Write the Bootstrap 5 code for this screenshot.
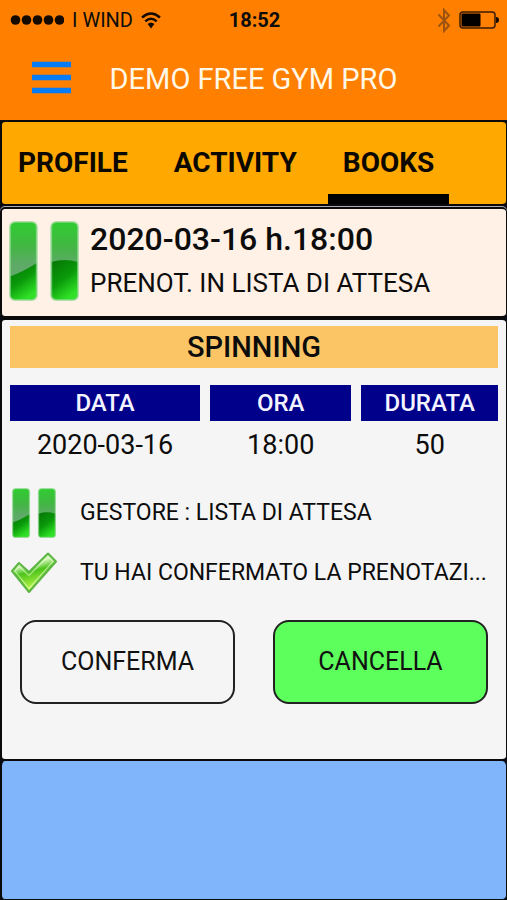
<!DOCTYPE html>
<html lang="it">
<head>
<meta charset="utf-8">
<meta name="viewport" content="width=device-width, initial-scale=1">
<title>Demo Free Gym Pro</title>
<link href="https://cdn.jsdelivr.net/npm/bootstrap@5.3.0/dist/css/bootstrap.min.css" rel="stylesheet">
<style>
  body { font-family: Roboto, "Liberation Sans", sans-serif; background: #ff8000; color: #0c0c0c; }
  .status { height: 40px; padding: 0 8px 0 10px; font-size: 20px; }
  .side { flex: 1 1 0; }
  .appbar { height: 80px; padding: 0 32px 2px; }
  .app-title { font-size: 29px; line-height: 40px; font-weight: 400; color: #fff8e8; }
  .balance { width: 39px; }
  .panels { background: #0a0a14; }
  .panel { border: 0 solid #0a0a0a; border-width: 2px 1px 2px 2px; border-radius: 5px; }
  .tabs { background: #ffa800; height: 86px; padding-left: 1px; }
  .tab-link { font-size: 28px; line-height: 40px; font-weight: 700; color: #0c0800; text-decoration: none; padding: 20px 15px 11px; border-bottom: 10px solid transparent; }
  .tab-link.active { border-color: #000; }
  .booking { background: #fff1e6; height: 111px; padding: 0 7px 3px; margin-top: 1px; box-shadow: 0 -1px #aaaabe; gap: 11px; }
  .booking h2 { font-size: 32px; line-height: 44px; font-weight: 500; }
  .booking p { font-size: 26px; line-height: 44px; }
  .detail { background: #f5f5f5; padding: 6px 8px 55px; }
  .course { background: #fbc565; font-size: 29px; line-height: 42px; font-weight: 500; margin-bottom: 17px; }
  .slots { border-collapse: separate; border-spacing: 0; table-layout: fixed; margin-bottom: 14px; }
  .slots th { background: #00008b; color: #f4f4ff; font-size: 24px; line-height: 36px; font-weight: 500; padding: 0; border-right: 10px solid #f5f5f5; }
  .slots th:last-child { border-right: 0; }
  .slots td { font-size: 27px; line-height: 48px; padding: 0 10px 0 0; }
  .slots td:last-child { padding: 0; }
  .c-date { width: 41%; } .c-hour { width: 31%; } .c-len { width: 28%; }
  .state { height: 60px; font-size: 23px; }
  .state svg { margin-right: 22px; }
  .actions { padding: 17px 10px 0; gap: 38px; }
  .act { height: 84px; font-size: 25px; border: 2px solid #222; border-radius: 16px; --bs-btn-color: #111; --bs-btn-hover-color: #111; }
  .act-cancel { background: #5cff5c; }
  .rest { background: #80b5fc; border-top-width: 0; border-bottom-width: 1px; }
</style>
</head>
<body class="d-flex flex-column min-vh-100">
<svg width="0" height="0" class="position-absolute" aria-hidden="true">
  <defs>
    <linearGradient id="barTop" x1="0" y1="0" x2="0" y2="1"><stop offset="0" stop-color="#30cc30"/><stop offset=".3" stop-color="#41b742"/><stop offset=".56" stop-color="#5fa969"/></linearGradient>
    <linearGradient id="barLow" x1="0" y1="0" x2=".5" y2="1"><stop offset="0" stop-color="#047404"/><stop offset=".55" stop-color="#0a990a"/><stop offset="1" stop-color="#2fe026"/></linearGradient>
    <linearGradient id="tick" x1="0" y1="0" x2=".3" y2="1"><stop offset="0" stop-color="#8fdc70"/><stop offset=".35" stop-color="#d4f6bc"/><stop offset=".55" stop-color="#4cc41c"/><stop offset="1" stop-color="#c5fb4a"/></linearGradient>
    <symbol id="pause" viewBox="0 0 68 78" preserveAspectRatio="none">
      <rect x="1" y="1" width="26" height="76" rx="5" fill="url(#barTop)"/>
      <path d="M1 54Q13 50 27 41V72Q27 77 22 77H6Q1 77 1 72Z" fill="url(#barLow)"/>
      <rect x="41" y="1" width="26" height="76" rx="5" fill="url(#barTop)"/>
      <path d="M41 40Q54 36 67 40V72Q67 77 62 77H46Q41 77 41 72Z" fill="url(#barLow)"/>
      <rect x="1" y="1" width="26" height="76" rx="5" fill="none" stroke="#8fd98f" stroke-opacity=".7" stroke-width="2"/>
      <rect x="41" y="1" width="26" height="76" rx="5" fill="none" stroke="#8fd98f" stroke-opacity=".7" stroke-width="2"/>
    </symbol>
  </defs>
</svg>

<header>
  <div class="status d-flex align-items-center">
    <div class="side d-flex align-items-center">
      <svg width="54" height="12" viewBox="0 0 54 12" class="me-2" aria-hidden="true"><g fill="#140a00"><circle cx="5.500" cy="6" r="4.800"/><circle cx="16.500" cy="6" r="4.800"/><circle cx="27.500" cy="6" r="4.800"/><circle cx="38.500" cy="6" r="4.800"/><circle cx="49.500" cy="6" r="4.800"/></g></svg>
      <span>I WIND</span>
      <svg width="20" height="17" viewBox="0 0 20 17" class="ms-2" aria-hidden="true"><g fill="none" stroke="#140a00" stroke-width="2.400"><path d="M1 5.500Q10-2.500 19 5.500"/><path d="M4.300 9.300Q10 4 15.700 9.300"/></g><path d="M6.600 12Q10 9 13.400 12L10 16.500Z" fill="#140a00"/></svg>
    </div>
    <span class="fw-bold">18:52</span>
    <div class="side d-flex align-items-center justify-content-end">
      <svg width="14" height="25" viewBox="0 0 14 25" class="me-2" aria-hidden="true"><path d="M1.500 6.500L12 17.500L7 23V2L12 7.500L1.500 18.500" fill="none" stroke="#9c5410" stroke-width="2"/></svg>
      <svg width="40" height="18" viewBox="0 0 40 18" aria-hidden="true"><rect x="1" y="1" width="35" height="16" rx="3" fill="none" stroke="#3a1c00" stroke-width="1.500"/><rect x="2.500" y="2.500" width="19" height="13" rx="1" fill="#000"/><path d="M37 6Q40 6 40 9T37 12Z" fill="#140a00"/></svg>
    </div>
  </div>
  <nav class="appbar d-flex align-items-center">
    <button type="button" class="btn p-0 border-0 d-flex" aria-label="Menu">
      <svg width="39" height="36" viewBox="0 0 39 36" aria-hidden="true"><path d="M0 3.500H39M0 16.500H39M0 29.500H39" stroke="#087cf4" stroke-width="5.500"/></svg>
    </button>
    <h1 class="app-title mb-0 mx-auto">DEMO FREE GYM PRO</h1>
    <span class="balance"></span>
  </nav>
</header>

<main class="panels flex-grow-1 d-flex flex-column">
  <nav class="panel tabs d-flex align-items-end">
    <a href="#profile" class="tab-link">PROFILE</a>
    <a href="#activity" class="tab-link ms-3">ACTIVITY</a>
    <a href="#books" class="tab-link active ms-3" aria-current="page">BOOKS</a>
  </nav>
  <section class="panel booking d-flex align-items-center">
    <svg width="70" height="80" role="img" aria-label="In attesa"><use href="#pause"/></svg>
    <div>
      <h2 class="mb-0">2020-03-16 h.18:00</h2>
      <p class="mb-0">PRENOT. IN LISTA DI ATTESA</p>
    </div>
  </section>
  <section class="panel detail">
    <h3 class="course text-center">SPINNING</h3>
    <table class="slots w-100 text-center">
      <thead><tr><th class="c-date" scope="col">DATA</th><th class="c-hour" scope="col">ORA</th><th class="c-len" scope="col">DURATA</th></tr></thead>
      <tbody><tr><td>2020-03-16</td><td>18:00</td><td>50</td></tr></tbody>
    </table>
    <div class="state d-flex align-items-center">
      <svg width="48" height="50" class="flex-shrink-0" aria-hidden="true"><use href="#pause" x="2" width="44" height="50"/></svg>
      <span class="text-nowrap">GESTORE : LISTA DI ATTESA</span>
    </div>
    <div class="state d-flex align-items-center">
      <svg width="48" height="42" viewBox="0 0 48 42" class="flex-shrink-0" aria-hidden="true"><path d="M2 19L9 11L19 20L38 1.500L46 9.500L19 40Z" fill="url(#tick)" stroke="#5cb544" stroke-width="2" stroke-linejoin="round"/><path d="M5 19L9 14.500L19 23.500L38 4.500L43 9.500L19 36.500Z" fill="none" stroke="#e4ffc8" stroke-opacity=".6" stroke-width="1.200"/></svg>
      <span class="text-nowrap">TU HAI CONFERMATO LA PRENOTAZI...</span>
    </div>
    <div class="actions d-flex">
      <button type="button" class="btn act flex-fill w-50">CONFERMA</button>
      <button type="button" class="btn act act-cancel flex-fill w-50">CANCELLA</button>
    </div>
  </section>
  <div class="panel rest flex-grow-1"></div>
</main>
<script src="https://cdn.jsdelivr.net/npm/bootstrap@5.3.0/dist/js/bootstrap.bundle.min.js"></script>
</body>
</html>
